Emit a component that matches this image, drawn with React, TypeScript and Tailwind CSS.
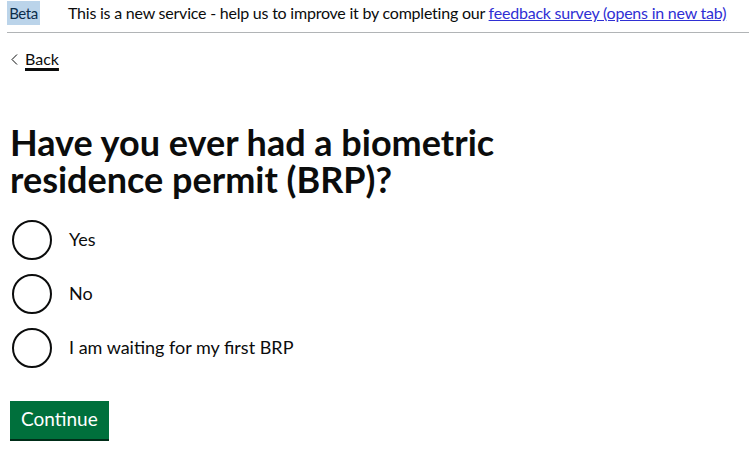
const options = ['Yes', 'No', 'I am waiting for my first BRP'];

export default function App() {
  return (
    <div className="min-h-screen bg-white text-[#0b0c0c] font-['Lato',sans-serif]">
      {/* Phase banner */}
      <div className="ml-[7px] flex items-start gap-[28px] border-b border-[#b1b4b6] pt-[1px] pb-[7px]">
        <span className="w-[33px] shrink-0 text-center bg-[#bbd4ea] h-[24px] leading-[24px] text-[15px] tracking-[-0.4px] text-[#0c2d4a]">Beta</span>
        <p className="text-[16px] leading-[24px] tracking-[-0.22px] whitespace-nowrap">
          This is a new service - help us to improve it by completing our{' '}
          <a href="#" className="text-[#2f2fd4] underline">feedback survey (opens in new tab)</a>
        </p>
      </div>

      <main className="px-[10px]">
        <a href="#" className="mt-[16px] inline-flex items-center gap-[7px] text-[16px] leading-[20px]">
          <svg width="7" height="11" viewBox="0 0 7 11" className="ml-[1px]">
            <path d="M6 0.5 L1 5.5 L6 10.5" fill="none" stroke="#0b0c0c" strokeWidth="1" />
          </svg>
          <span className="underline decoration-[3px] underline-offset-[3px]">Back</span>
        </a>

        <h1 className="mt-[53px] text-[36px] leading-[37px] font-bold">
          Have you ever had a biometric
          <br />
          residence permit (BRP)?
        </h1>

        <div className="mt-[22px] flex flex-col gap-[14px]">
          {options.map((o) => (
            <label key={o} className="flex items-center gap-[17px] pl-[2px]">
              <span className="w-[40px] h-[40px] rounded-full border-2 border-[#0b0c0c]" />
              <span className="text-[18px]">{o}</span>
            </label>
          ))}
        </div>

        <button className="mt-[33px] h-[38px] px-[11px] bg-[#00703c] text-white text-[19px] shadow-[0_2px_0_#002d18]">
          Continue
        </button>
      </main>
    </div>
  );
}
